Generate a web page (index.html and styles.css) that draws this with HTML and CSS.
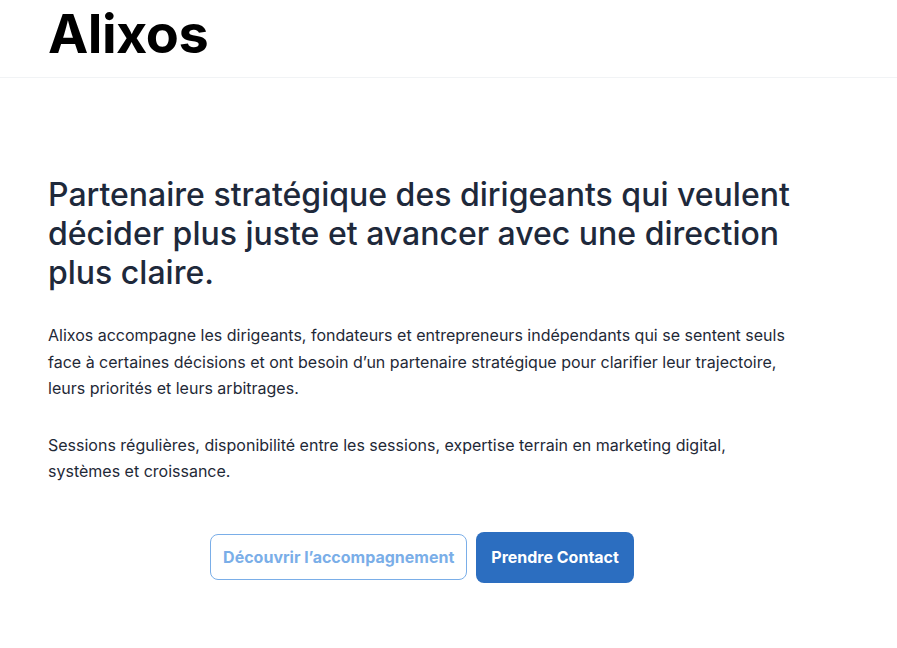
FILE: index.html
```html
<!DOCTYPE html>
<html lang="fr">
<head>
<meta charset="utf-8">
<title>Alixos</title>
<link rel="stylesheet" href="styles.css">
</head>
<body>
<header class="site-header">
  <div class="container">
    <a class="logo" href="#">Alixos</a>
  </div>
</header>
<main class="hero">
  <div class="container">
    <h1 class="hero-title">Partenaire stratégique des dirigeants qui veulent décider plus juste et avancer avec une direction plus claire.</h1>
    <p class="hero-text">Alixos accompagne les dirigeants, fondateurs et entrepreneurs indépendants qui se sentent seuls face à certaines décisions et ont besoin d’un partenaire stratégique pour clarifier leur trajectoire, leurs priorités et leurs arbitrages.</p>
    <p class="hero-text">Sessions régulières, disponibilité entre les sessions, expertise terrain en marketing digital, systèmes et croissance.</p>
    <div class="actions">
      <a class="btn btn-outline" href="#">Découvrir l’accompagnement</a>
      <a class="btn btn-primary" href="#">Prendre Contact</a>
    </div>
  </div>
</main>
</body>
</html>
```
FILE: styles.css
```css
* { box-sizing: border-box; }
html, body { margin: 0; padding: 0; background: #ffffff; }
body { font-family: Inter, "Noto Sans", sans-serif; color: #1e293b; }
.container { max-width: 796px; padding: 0 0 0 48px; }
.site-header { border-bottom: 1px solid #f1f3f5; height: 78px; }
.logo { display: inline-block; font-weight: 700; font-size: 54px; line-height: 68px; color: #000; text-decoration: none; letter-spacing: -0.5px; }
.hero { padding-top: 97px; }
.hero-title { margin: 0 0 30px; font-size: 32px; font-weight: 500; line-height: 39px; color: #1e293b; letter-spacing: 0; }
.hero-text { margin: 0 0 30px; font-size: 16px; line-height: 26.5px; color: #1f2937; }
.actions { display: flex; justify-content: center; align-items: center; gap: 9px; margin-top: 47px; }
.btn { display: inline-flex; align-items: center; justify-content: center; font-weight: 700; font-size: 16px; text-decoration: none; border-radius: 8px; }
.btn-outline { height: 46px; padding: 0 12px; border: 1px solid #7aaee8; color: #7aaee8; }
.btn-primary { height: 51px; padding: 0 15px; background: #2c6ec0; color: #ffffff; }
```
